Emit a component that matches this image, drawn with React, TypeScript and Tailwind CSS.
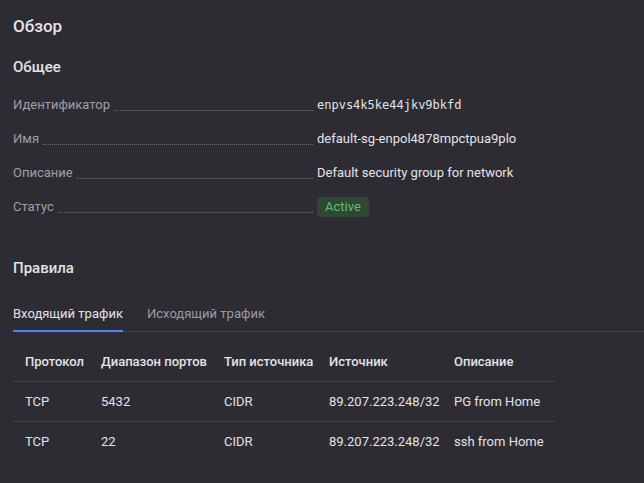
const rows = [
  { label: "Идентификатор", value: "enpvs4k5ke44jkv9bkfd", mono: true },
  { label: "Имя", value: "default-sg-enpol4878mpctpua9plo" },
  { label: "Описание", value: "Default security group for network" },
];

const rules = [
  { proto: "TCP", ports: "5432", type: "CIDR", source: "89.207.223.248/32", desc: "PG from Home" },
  { proto: "TCP", ports: "22", type: "CIDR", source: "89.207.223.248/32", desc: "ssh from Home" },
];

function Label({ text }: { text: string }) {
  return (
    <div className="flex w-[304px] items-end">
      <span className="text-[#a09fa6]">{text}</span>
      <span className="mx-[4px] mb-[4px] flex-1 border-b border-dotted border-[#6c6b72]" />
    </div>
  );
}

export default function App() {
  return (
    <div className="h-[483px] w-[644px] overflow-hidden bg-[#2d2c33] font-['Roboto',sans-serif] text-[13px] text-[#e3e3e6]">
      <div className="pl-[13px] pt-[15px]">
        <h1 className="text-[17px] font-medium leading-[22px]">Обзор</h1>
        <h2 className="mt-[20px] text-[15px] font-medium leading-[20px]">Общее</h2>

        <div className="mt-[11px] flex flex-col">
          {rows.map((r) => (
            <div key={r.label} className="flex h-[34px] items-center">
              <Label text={r.label} />
              <span
                className={
                  r.mono
                    ? "font-['DejaVu_Sans_Mono',monospace] text-[12px]"
                    : ""
                }
              >
                {r.value}
              </span>
            </div>
          ))}
          <div className="flex h-[34px] items-center">
            <Label text="Статус" />
            <span className="rounded-[4px] bg-[#2f4734] px-[8px] py-[1px] leading-[18px] text-[#5fbf6c]">
              Active
            </span>
          </div>
        </div>

        <h2 className="mt-[34px] text-[15px] font-medium leading-[20px]">Правила</h2>

        <div className="mt-[26px] flex border-b border-[#46454c]">
          <div className="-mb-px w-[110px] border-b-2 border-[#5282ff] pb-[6px]">Входящий трафик</div>
          <div className="ml-[24px] pb-[6px] text-[#9c9ba2]">Исходящий трафик</div>
        </div>

        <table className="mt-[10px] w-[542px] table-fixed border-collapse text-left">
          <thead>
            <tr className="h-[40px] border-b border-[#46454c]">
              <th className="w-[88px] pl-[12px] font-medium">Протокол</th>
              <th className="w-[123px] font-medium">Диапазон портов</th>
              <th className="w-[105px] font-medium">Тип источника</th>
              <th className="w-[125px] font-medium">Источник</th>
              <th className="font-medium">Описание</th>
            </tr>
          </thead>
          <tbody>
            {rules.map((r, i) => (
              <tr
                key={i}
                className={i === 0 ? "h-[40px] border-b border-[#46454c]" : "h-[40px]"}
              >
                <td className="pl-[12px]">{r.proto}</td>
                <td>{r.ports}</td>
                <td>{r.type}</td>
                <td>{r.source}</td>
                <td>{r.desc}</td>
              </tr>
            ))}
          </tbody>
        </table>
      </div>
    </div>
  );
}
